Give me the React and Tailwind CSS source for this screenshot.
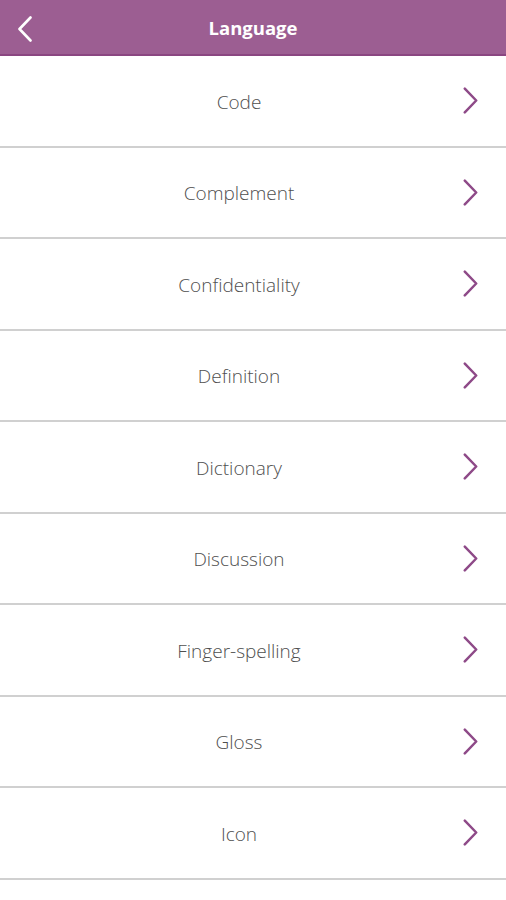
import React from "react";

const items = ["Code","Complement","Confidentiality","Definition","Dictionary","Discussion","Finger-spelling","Gloss","Icon"];

function Chevron({ className, color, sw }) {
  return (
    <svg className={className} viewBox="0 0 14 26" fill="none">
      <path d="M1.5 1.5 L12.5 13 L1.5 24.5" stroke={color} strokeWidth={sw} strokeLinecap="round" strokeLinejoin="round" />
    </svg>
  );
}

export default function App() {
  return (
    <div className="w-[506px] h-[900px] bg-white overflow-hidden" style={{ fontFamily: '"Open Sans", sans-serif' }}>
      <div className="h-[56px] bg-[#9c5e92] border-b-2 border-[#8a4681] flex items-center relative">
        <div className="absolute left-[18px] top-[16px]">
          <Chevron className="w-[14px] h-[26px] rotate-180" color="#ffffff" sw={2.6} />
        </div>
        <div className="flex-1 text-center text-white font-bold text-[18.5px] leading-none pt-[2px]">Language</div>
      </div>
      {items.map((t) => (
        <div key={t} className="h-[91.5px] border-b-2 border-[#d0d0d0] flex items-center relative">
          <div className="flex-1 text-center pr-[28px] pt-[2px] text-[19px] font-light text-[#4f4f4f]">{t}</div>
          <Chevron className="absolute left-[463px] w-[15px] h-[27px]" color="#8e4a88" sw={2.4} />
        </div>
      ))}
    </div>
  );
}
